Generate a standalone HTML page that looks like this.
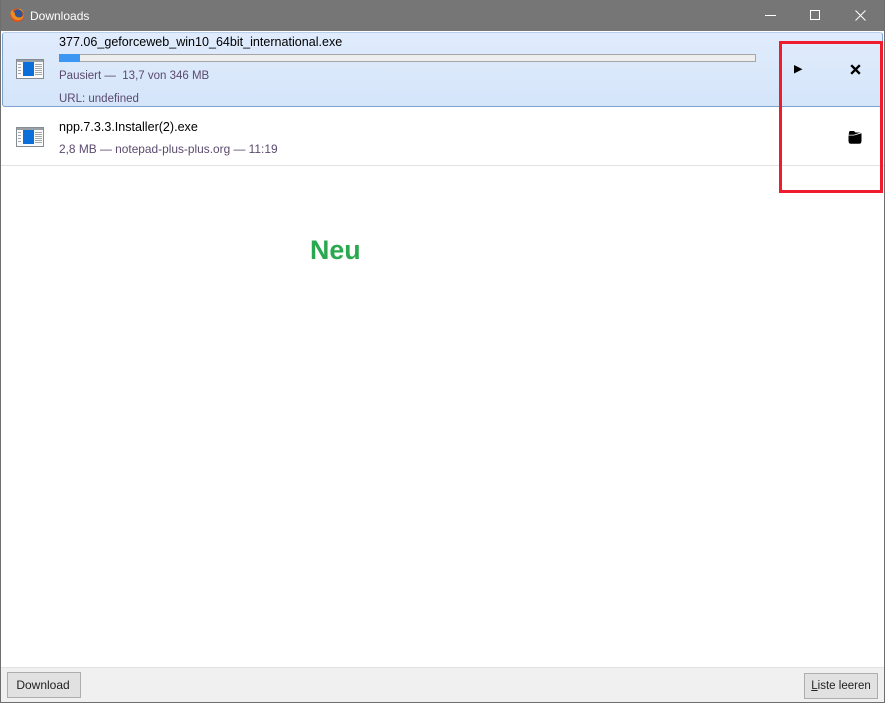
<!DOCTYPE html>
<html><head><meta charset="utf-8"><style>
html,body{margin:0;padding:0;background:#fff}
body{width:885px;height:703px;position:relative;overflow:hidden;font-family:"Liberation Sans",sans-serif;font-size:12px}
.a{position:absolute;white-space:nowrap}
.n{color:#000;font-size:12.55px;line-height:16px}
.s{color:#5b4a6e;font-size:11.5px;line-height:16px}
.btn{position:absolute;box-sizing:border-box;background:#e1e1e1;border:1px solid #adadad;color:#222;text-align:center}
</style></head><body>
<div class="a" style="left:0;top:0;width:885px;height:31px;background:#767676"></div>
<div class="a" style="left:0;top:0;width:1px;height:703px;background:#6e6e6e;z-index:5"></div>
<div class="a" style="right:0;top:0;width:1px;height:703px;background:#6e6e6e;z-index:5"></div>
<div class="a" style="left:0;top:702px;width:885px;height:1px;background:#6e6e6e;z-index:5"></div>
<svg class="a" style="left:9px;top:7px" width="16" height="16" viewBox="0 0 16 16">
<circle cx="8.200" cy="8.200" r="6.800" fill="#d9541e"/><circle cx="9" cy="7" r="4.600" fill="#2f5596"/><path d="M1.500 6C2 10 5 13.500 9.500 13.200C12.500 13 14.800 10.500 15 7C14 9.800 11.500 11 8.800 10.200C6.500 9.500 5.500 7.500 6 5.500C4.500 5.500 3.500 4.500 4.200 2.500C2.800 3.300 1.800 4.500 1.500 6Z" fill="#ee8a22"/><path d="M9 1.800C11.500 1.600 14 3.400 14.800 6.500C13.800 4.500 12 3 9 1.800Z" fill="#f5b62e"/>
</svg>
<div class="a" style="left:30px;top:8px;color:#fff;font-size:12px;line-height:16px">Downloads</div>
<div class="a" style="left:765px;top:15px;width:11px;height:1px;background:#fff"></div>
<div class="a" style="left:810px;top:10px;width:8px;height:8px;border:1px solid #fff"></div>
<svg class="a" style="left:855px;top:10px" width="11" height="11" viewBox="0 0 11 11"><path d="M.5.5L10.500 10.500M10.500.5L.5 10.500" stroke="#fff" stroke-width="1" fill="none"/></svg>

<div class="a" style="left:2px;top:32px;width:881px;height:75px;box-sizing:border-box;background:linear-gradient(#e0ecfd,#d5e5f9);border:1px solid #7da2ce;border-top-color:#b8d0ec;border-radius:3px"></div>
<div class="a" style="left:1px;top:165px;width:883px;height:1px;background:#e3e3e3"></div>

<svg class="a" style="left:16px;top:59px" width="28" height="20" viewBox="0 0 28 20">
<rect x=".5" y=".5" width="27" height="19" fill="#fafafa" stroke="#858c93"/><rect x="1" y="1" width="26" height="2" fill="#9aa0a6"/>
<rect x="7" y="3" width="11" height="14" fill="#0a6fd8"/>
<path d="M2 5.500h3M2 8.500h3M2 11.500h3M2 14.500h3M19 5.500h7M19 7.500h7M19 9.500h7M19 11.500h7M19 13.500h7M19 15.500h7" stroke="#a3a8ad" stroke-width="1"/></svg>
<svg class="a" style="left:16px;top:127px" width="28" height="20" viewBox="0 0 28 20">
<rect x=".5" y=".5" width="27" height="19" fill="#fafafa" stroke="#858c93"/><rect x="1" y="1" width="26" height="2" fill="#9aa0a6"/>
<rect x="7" y="3" width="11" height="14" fill="#0a6fd8"/>
<path d="M2 5.500h3M2 8.500h3M2 11.500h3M2 14.500h3M19 5.500h7M19 7.500h7M19 9.500h7M19 11.500h7M19 13.500h7M19 15.500h7" stroke="#a3a8ad" stroke-width="1"/></svg>

<div class="a n" style="left:59px;top:34px">377.06_geforceweb_win10_64bit_international.exe</div>
<div class="a" style="left:59px;top:54px;width:697px;height:8px;box-sizing:border-box;background:#eeeeee;border:1px solid #a6a6a6"></div>
<div class="a" style="left:59px;top:54px;width:21px;height:8px;background:#3c97f2"></div>
<div class="a s" style="left:59px;top:68px">Pausiert —&nbsp; 13,7 von 346 MB</div>
<div class="a s" style="left:59px;top:91px">URL: undefined</div>
<div class="a n" style="left:59px;top:119px">npp.7.3.3.Installer(2).exe</div>
<div class="a s" style="left:59px;top:141px;font-size:11.9px">2,8 MB — notepad-plus-plus.org — 11:19</div>

<div class="a" style="left:310px;top:234px;color:#2aa84f;font-size:26.800px;font-weight:bold;line-height:32px">Neu</div>

<svg class="a" style="left:794px;top:65px" width="9" height="9" viewBox="0 0 9 9"><path d="M0 0L8.500 4.200L0 8.500Z" fill="#000"/></svg>
<svg class="a" style="left:850px;top:64px" width="11" height="11" viewBox="0 0 11 11"><path d="M1.200 1.200L9.800 9.800M9.800 1.200L1.200 9.800" stroke="#000" stroke-width="2.400" fill="none"/></svg>
<svg class="a" style="left:848px;top:130px" width="14" height="14" viewBox="0 0 14 14"><path d="M1 2.500Q1 1 2.500 1H6L7.500 2.500H12.500L6 4.700H.7Z M0.500 5.500L6 5.500L13.500 3.200V11Q13.500 13.800 11 13.800H3Q0.500 13.800 0.500 11Z" fill="#000"/></svg>

<div class="a" style="left:779px;top:41px;width:104px;height:152px;box-sizing:border-box;border:3px solid #ee1c2c"></div>

<div class="a" style="left:1px;top:667px;width:883px;height:35px;box-sizing:border-box;background:#f0f0f0;border-top:1px solid #e2e2e2"></div>
<div class="btn" style="left:7px;top:672px;width:74px;height:26px;line-height:24px;font-size:12px;text-indent:-2px">Download</div>
<div class="btn" style="left:804px;top:673px;width:74px;height:26px;line-height:24px;font-size:11.5px"><u>L</u>iste leeren</div>
</body></html>
